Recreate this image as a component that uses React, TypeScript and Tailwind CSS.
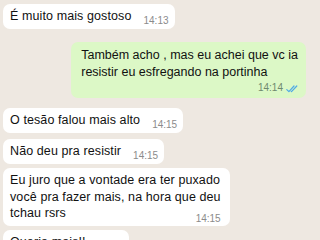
const Checks = () => (
  <svg width="12" height="8" viewBox="0 0 12 8" fill="none" className="ml-[3px] mb-[1px]">
    <path d="M0.8 4.6 L2.9 6.7 L8 1" stroke="#4fa9e6" strokeWidth="1.2" strokeLinecap="round" strokeLinejoin="round" />
    <path d="M5.2 6.4 L5.5 6.7 L10.8 1" stroke="#4fa9e6" strokeWidth="1.2" strokeLinecap="round" strokeLinejoin="round" />
  </svg>
);

const Time = ({ t }: { t: string }) => (
  <span className="ml-[12px] text-[10px] leading-[12px] tracking-normal translate-y-[3px] whitespace-nowrap text-[#8b8b8b]">
    {t}
  </span>
);

const Incoming = ({ text, t, className = "" }: { text: string; t: string; className?: string }) => (
  <div className={`self-start flex items-end bg-white rounded-[7px] pl-[7px] pr-[6px] pt-[4px] pb-[5px] ${className}`}>
    <span className="leading-[16px]">{text}</span>
    <Time t={t} />
  </div>
);

export default function App() {
  return (
    <div
      className="w-[320px] h-[240px] overflow-hidden bg-[#eee8e1] text-[#111] text-[12.5px] tracking-[0.1px] flex flex-col px-[3px] pt-[4px]"
      style={{ fontFamily: '"Liberation Sans", Arial, sans-serif' }}
    >
      <Incoming text="É muito mais gostoso" t="14:13" />

      <div className="self-end mr-[11px] mt-[13px] bg-[#dcf8c6] rounded-[7px] pl-[10px] pr-[8px] pt-[5px] pb-[4px] tracking-normal">
        <div className="leading-[16.5px]">Também acho , mas eu achei que vc ia</div>
        <div className="leading-[16.5px]">resistir eu esfregando na portinha</div>
        <div className="flex justify-end items-end h-[14px] text-[10px] leading-[12px] text-[#6f8a6e]">
          14:14
          <Checks />
        </div>
      </div>

      <Incoming text="O tesão falou mais alto" t="14:15" className="mt-[10px]" />
      <Incoming text="Não deu pra resistir" t="14:15" className="mt-[6px]" />

      <div className="self-start mt-[4px] bg-white rounded-[7px] pl-[7px] pr-[9px] pt-[4px] pb-[4px]">
        <div className="leading-[16.5px]">Eu juro que a vontade era ter puxado</div>
        <div className="leading-[16.5px]">você pra fazer mais, na hora que deu</div>
        <div className="flex items-end justify-between">
          <span className="leading-[16.5px]">tchau rsrs</span>
          <Time t="14:15" />
        </div>
      </div>

      <Incoming text="Queria mais!!" t="14:15" className="mt-[4px]" />
    </div>
  );
}
